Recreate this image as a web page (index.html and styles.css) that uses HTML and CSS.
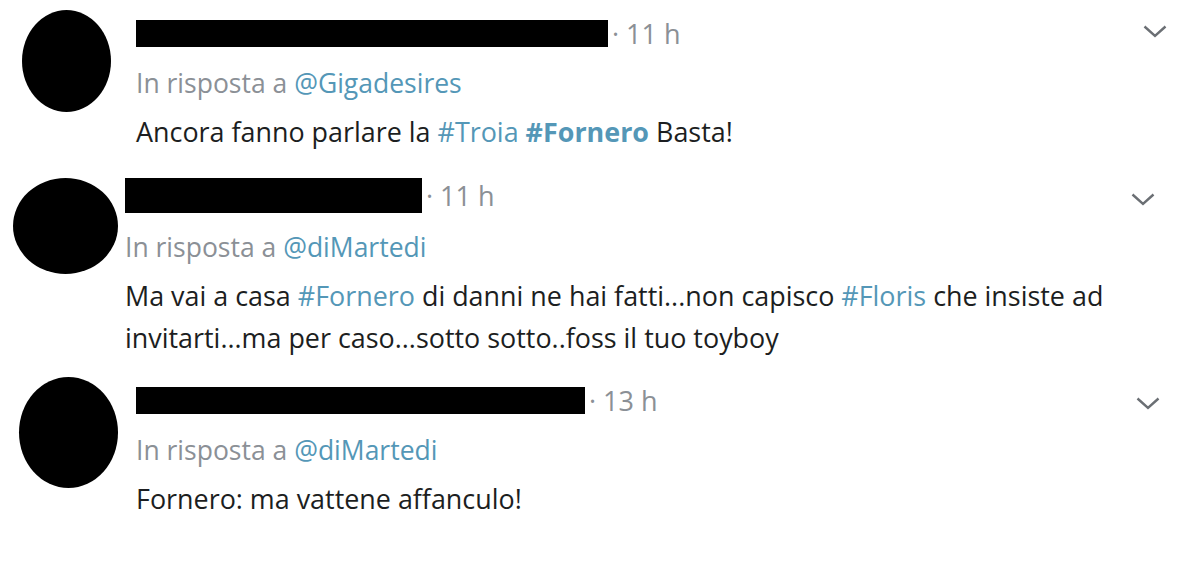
FILE: index.html
```html
<!DOCTYPE html>
<html lang="it">
<head>
  <meta charset="UTF-8" />
  <title>Risposte</title>
  <link rel="stylesheet" href="styles.css">
</head>
<body>

<div class="thread">

  <article class="tweet tweet-1">
    <div class="avatar"></div>
    <div class="tweet-body">
      <div class="tweet-head">
        <span class="name-bar"></span>
        <span class="time">· 11 h</span>
      </div>
      <div class="reply-to">In risposta a <a href="#">@Gigadesires</a></div>
      <p class="tweet-text">Ancora fanno parlare la <a href="#">#Troia</a> <a href="#" class="strong">#Fornero</a> Basta!</p>
    </div>
    <svg class="caret" viewBox="0 0 24 13"><path d="M1.5 1.5 L12 11 L22.5 1.5" /></svg>
  </article>

  <article class="tweet tweet-2">
    <div class="avatar"></div>
    <div class="tweet-body">
      <div class="tweet-head">
        <span class="name-bar"></span>
        <span class="time">· 11 h</span>
      </div>
      <div class="reply-to">In risposta a <a href="#">@diMartedi</a></div>
      <p class="tweet-text">Ma vai a casa <a href="#">#Fornero</a> di danni ne hai fatti...non capisco <a href="#">#Floris</a> <span>che insiste ad</span> <span>invitarti...ma per caso...sotto sotto..foss il tuo toyboy</span></p>
    </div>
    <svg class="caret" viewBox="0 0 24 13"><path d="M1.5 1.5 L12 11 L22.5 1.5" /></svg>
  </article>

  <article class="tweet tweet-3">
    <div class="avatar"></div>
    <div class="tweet-body">
      <div class="tweet-head">
        <span class="name-bar"></span>
        <span class="time">· 13 h</span>
      </div>
      <div class="reply-to">In risposta a <a href="#">@diMartedi</a></div>
      <p class="tweet-text">Fornero: ma vattene affanculo!</p>
    </div>
    <svg class="caret" viewBox="0 0 24 13"><path d="M1.5 1.5 L12 11 L22.5 1.5" /></svg>
  </article>

</div>

</body>
</html>
```

FILE: styles.css
```css
body {
  margin: 0;
  background: #fff;
  font-family: 'Open Sans', 'Noto Sans', sans-serif;
  color: #1c1e21;
}
a {
  color: #5497b7;
  text-decoration: none;
}
.thread {
  width: 1200px;
}
.tweet {
  display: flex;
  align-items: flex-start;
}
.avatar {
  background: #000;
  border-radius: 50%;
  flex-shrink: 0;
}
.tweet-body {
  flex: 1;
}
.tweet-head {
  display: flex;
  align-items: center;
  height: 27px;
}
.name-bar {
  display: block;
  background: #000;
  height: 100%;
}
.time {
  color: #8b9096;
  font-size: 27px;
  margin-left: 4px;
  white-space: nowrap;
}
.reply-to {
  color: #8b9096;
  font-size: 26.5px;
  line-height: 30px;
  margin-top: 21px;
}
.tweet-text {
  font-size: 26.9px;
  line-height: 42px;
  margin: 13px 0 0;
  max-width: 990px;
}
.tweet-text .strong {
  font-weight: 700;
}
.caret {
  width: 24px;
  height: 13px;
  flex-shrink: 0;
  fill: none;
  stroke: #6b6f74;
  stroke-width: 2.4;
}

.tweet-1 { padding: 10px 33px 0 22px; }
.tweet-1 .avatar { width: 89px; height: 102px; margin-right: 25px; }
.tweet-1 .tweet-head { margin-top: 10px; }
.tweet-1 .name-bar { width: 472px; }
.tweet-1 .caret { margin-top: 15px; }

.tweet-2 { padding: 25px 45px 0 13px; }
.tweet-2 .avatar { width: 105px; height: 96px; margin-right: 7px; }
.tweet-2 .tweet-head { height: 35px; }
.tweet-2 .name-bar { width: 297px; }
.tweet-2 .reply-to { margin-top: 19px; }
.tweet-2 .caret { margin-top: 15px; }

.tweet-3 { padding: 18px 40px 0 19px; }
.tweet-3 .avatar { width: 99px; height: 111px; margin-right: 18px; }
.tweet-3 .tweet-head { margin-top: 10px; }
.tweet-3 .name-bar { width: 449px; }
.tweet-3 .caret { margin-top: 20px; }
```
